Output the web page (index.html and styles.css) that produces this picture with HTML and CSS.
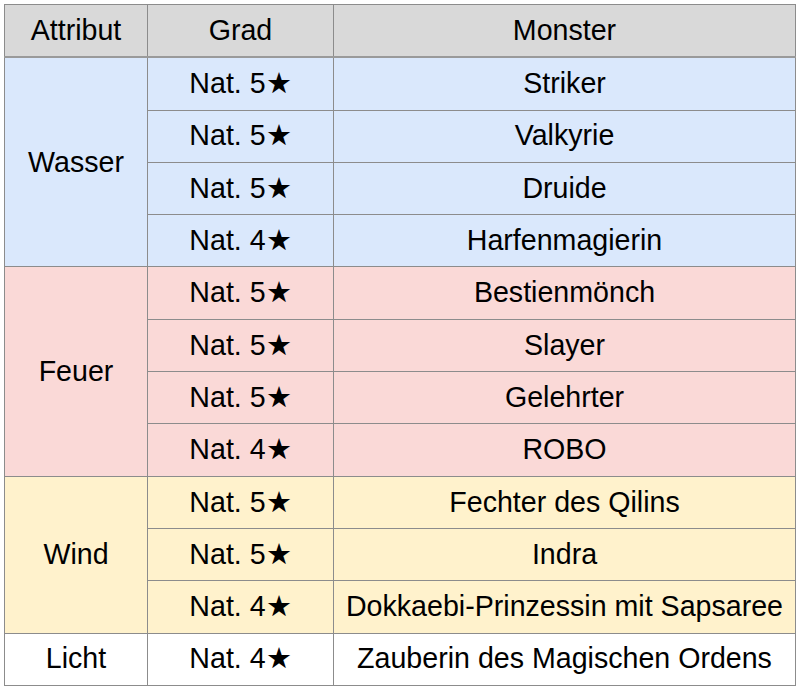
FILE: index.html
```html
<!DOCTYPE html>
<html lang="de">
<head>
<meta charset="utf-8">
<title>Monster</title>
<link rel="stylesheet" href="styles.css">
</head>
<body>
<table class="tbl">
  <colgroup>
    <col class="c1"><col class="c2"><col class="c3">
  </colgroup>
  <thead>
    <tr><th>Attribut</th><th>Grad</th><th>Monster</th></tr>
  </thead>
  <tbody class="water">
    <tr><td rowspan="4">Wasser</td><td>Nat. 5★</td><td>Striker</td></tr>
    <tr><td>Nat. 5★</td><td>Valkyrie</td></tr>
    <tr><td>Nat. 5★</td><td>Druide</td></tr>
    <tr><td>Nat. 4★</td><td>Harfenmagierin</td></tr>
  </tbody>
  <tbody class="fire">
    <tr><td rowspan="4">Feuer</td><td>Nat. 5★</td><td>Bestienmönch</td></tr>
    <tr><td>Nat. 5★</td><td>Slayer</td></tr>
    <tr><td>Nat. 5★</td><td>Gelehrter</td></tr>
    <tr><td>Nat. 4★</td><td>ROBO</td></tr>
  </tbody>
  <tbody class="wind">
    <tr><td rowspan="3">Wind</td><td>Nat. 5★</td><td>Fechter des Qilins</td></tr>
    <tr><td>Nat. 5★</td><td>Indra</td></tr>
    <tr><td>Nat. 4★</td><td>Dokkaebi-Prinzessin mit Sapsaree</td></tr>
  </tbody>
  <tbody class="light">
    <tr><td>Licht</td><td>Nat. 4★</td><td>Zauberin des Magischen Ordens</td></tr>
  </tbody>
</table>
</body>
</html>
```
FILE: styles.css
```css
html, body {
  margin: 0;
  padding: 0;
  background: #ffffff;
}
body {
  padding: 4px 0 0 4px;
  font-family: "Liberation Sans", Arial, sans-serif;
  color: #000;
}
.tbl {
  border-collapse: collapse;
  width: 791px;
  table-layout: fixed;
  border: 1.5px solid #555;
}
.c1 { width: 143px; }
.c2 { width: 186px; }
.c3 { width: 462px; }
.tbl th, .tbl td {
  border: 1px solid #8c8c8c;
  height: 50.3px;
  padding: 0 0 1px 0;
  text-align: center;
  vertical-align: middle;
  font-size: 28.6px;
  font-weight: normal;
  line-height: 1;
}
.tbl th {
  background: #d9d9d9;
  border-bottom: 2px solid #9a9a9a;
}
.water td { background: #dae8fc; }
.fire td { background: #fad9d7; }
.wind td { background: #fff2cc; }
.light td { background: #ffffff; }
```
